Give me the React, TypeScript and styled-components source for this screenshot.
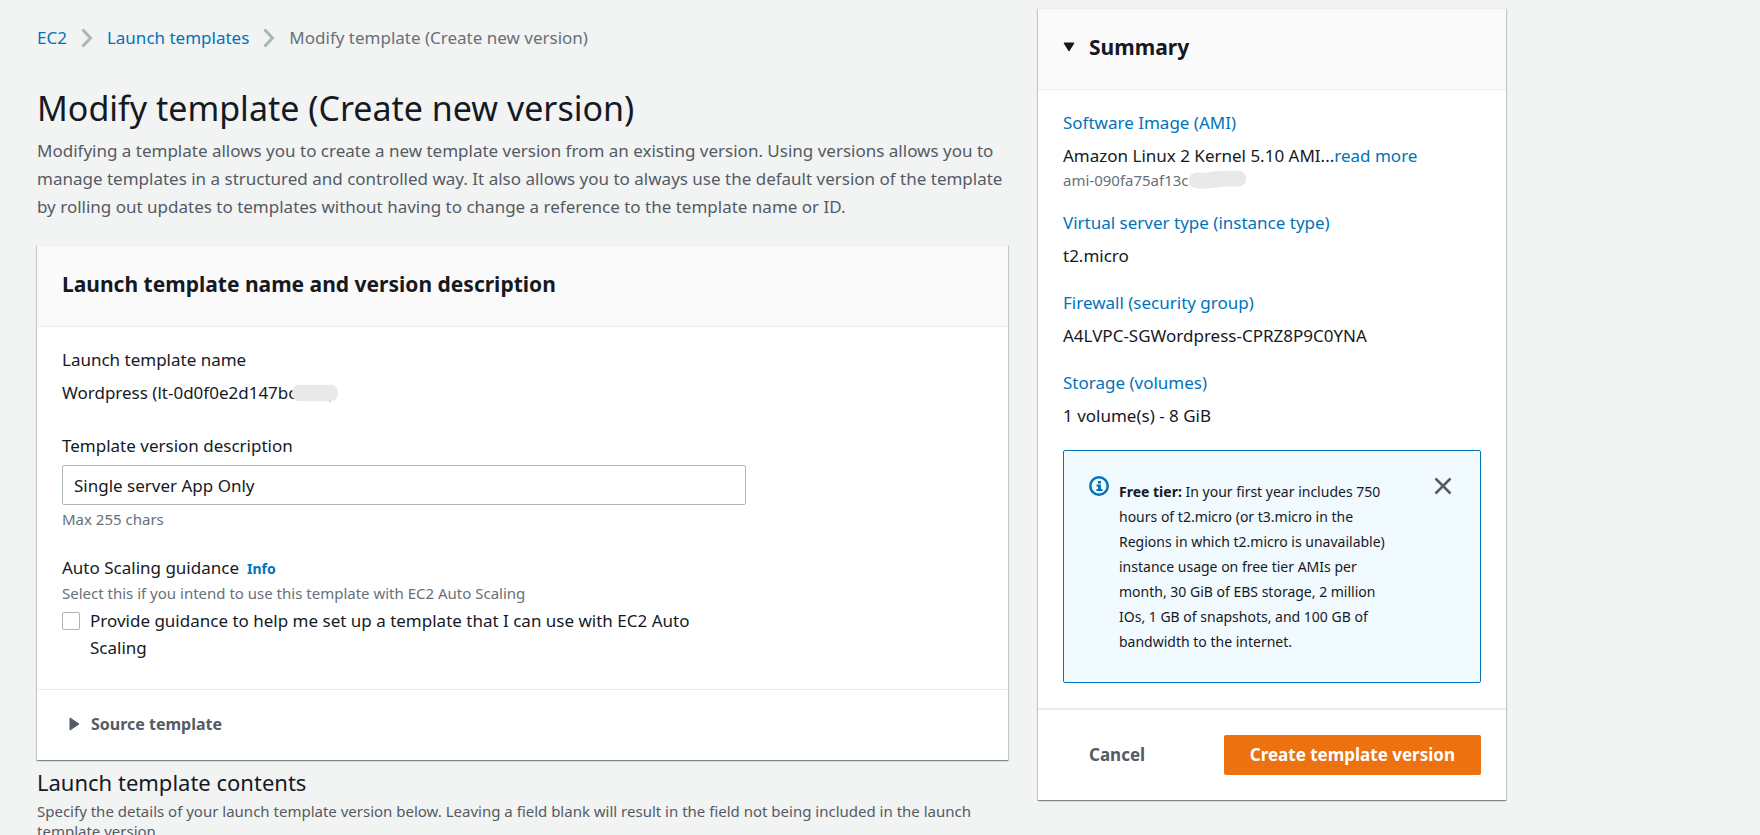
import React from "react";
import styled, { createGlobalStyle } from "styled-components";

const c = {
  page: "#f2f3f3",
  text: "#16191f",
  muted: "#545b64",
  hint: "#687078",
  link: "#0073bb",
  line: "#eaeded",
  field: "#aab7b8",
  orange: "#ec7211",
};

const GlobalStyle = createGlobalStyle`
  *, *::before, *::after { box-sizing: border-box; }
  body {
    margin: 0;
    background: ${c.page};
    color: ${c.text};
    font: 400 17px/28px "Noto Sans", "Open Sans", sans-serif;
  }
  h1, h2, p, dl, dd, dt, ol { margin: 0; padding: 0; }
  button, input { font: inherit; color: inherit; }
`;

const Page = styled.div`
  display: grid;
  grid-template-columns: minmax(0, 971fr) minmax(0, 468fr);
  gap: 30px;
  align-items: start;
  max-width: 1536px;
  padding: 0 30px 0 37px;
`;

const Main = styled.main`
  padding-top: 24px;
`;

const Link = styled.a<{ $small?: boolean }>`
  color: ${c.link};
  text-decoration: none;
  ${(p) => p.$small && "font-size: 14px; font-weight: 700; margin-left: 8px;"}
  &:hover { text-decoration: underline; }
`;

const Crumbs = styled.ol`
  display: flex;
  list-style: none;
  color: ${c.hint};
`;

const Crumb = styled.li`
  display: flex;
  align-items: center;
`;

const Chevron = styled.svg`
  width: 12px;
  height: 20px;
  margin: 0 14px;
  fill: none;
  stroke: ${c.field};
  stroke-width: 3;
`;

const PageTitle = styled.h1`
  margin-top: 31px;
  font-size: 34px;
  font-weight: 400;
  line-height: 50px;
`;

const Intro = styled.p`
  margin-top: 4px;
  color: ${c.muted};
`;

const Card = styled.section`
  background: #fff;
  border-top: 1px solid ${c.line};
  box-shadow: 0 1px 1px 0 rgba(0, 28, 36, 0.3), 1px 1px 1px 0 rgba(0, 28, 36, 0.15),
    -1px 1px 1px 0 rgba(0, 28, 36, 0.15);
`;

const TemplateCard = styled(Card)`
  margin-top: 24px;
`;

const SummaryCard = styled(Card)`
  margin-top: 8px;
`;

const CardHeader = styled.header`
  display: flex;
  align-items: center;
  gap: 14px;
  padding: 22px 25px 26px;
  background: #fafafa;
  border-bottom: 1px solid ${c.line};
`;

const CardTitle = styled.h2`
  font-size: 21px;
  font-weight: 700;
  line-height: 32px;
`;

const CardBody = styled.div<{ $roomy?: boolean }>`
  padding: 19px 25px ${(p) => (p.$roomy ? 28 : 25)}px;
`;

const Form = styled.form`
  display: flex;
  flex-direction: column;
  gap: 25px;
  max-width: 684px;
`;

const Field = styled.div`
  display: flex;
  flex-direction: column;
`;

const Value = styled.div`
  margin-top: 5px;
`;

const TextInput = styled.input`
  height: 40px;
  margin: 5px 0 4px;
  padding: 0 11px;
  background: #fff;
  border: 1px solid ${c.field};
  border-radius: 2px;
`;

const Hint = styled.p`
  color: ${c.hint};
  font-size: 15px;
  line-height: 20px;
`;

const CheckRow = styled.label`
  display: flex;
  gap: 10px;
  max-width: 640px;
  margin-top: 4px;
  line-height: 27px;
`;

const Checkbox = styled.input`
  appearance: none;
  flex: none;
  width: 18px;
  height: 18px;
  margin: 5px 0 0;
  background: #fff;
  border: 1px solid ${c.field};
  border-radius: 2px;
  &:checked { background: ${c.link}; }
`;

const Expander = styled.button`
  display: flex;
  align-items: center;
  gap: 10px;
  width: 100%;
  padding: 20px 32px 22px;
  background: none;
  border: 0;
  border-top: 1px solid ${c.line};
  color: ${c.muted};
  font-size: 16px;
  font-weight: 700;
  text-align: left;
`;

const SectionTitle = styled.h2`
  margin-top: 6px;
  font-size: 22px;
  font-weight: 400;
  line-height: 32px;
`;

const SectionText = styled(Hint)`
  margin-top: 3px;
  color: ${c.muted};
`;

const SummaryList = styled.dl`
  display: flex;
  flex-direction: column;
  gap: 19px;
`;

const SummaryValue = styled.dd`
  margin-top: 5px;
`;

const Masked = styled.span`
  position: relative;
`;

const MaskedEnd = styled.span`
  margin-left: 32px;
`;

const Mask = styled.svg<{ $start: number }>`
  position: absolute;
  left: ${(p) => p.$start}px;
  top: 50%;
  transform: translateY(-50%);
  fill: #e9e9e9;
`;

const Alert = styled.div`
  display: flex;
  align-items: flex-start;
  margin-top: 20px;
  padding: 25px;
  background: #f1faff;
  border: 1px solid ${c.link};
  border-radius: 2px;
  font-size: 14px;
  line-height: 25px;
`;

const AlertText = styled.p`
  flex: 1;
  padding: 3px 36px 3px 10px;
`;

const CloseButton = styled.button`
  display: flex;
  margin: 0 2px 0 0;
  padding: 0;
  background: none;
  border: 0;
`;

const Footer = styled.footer`
  display: flex;
  justify-content: space-between;
  padding: 25px;
  border-top: 2px solid ${c.line};
`;

const Button = styled.button<{ $primary?: boolean }>`
  height: 40px;
  padding: 0 26px;
  border: 0;
  border-radius: 2px;
  background: ${(p) => (p.$primary ? c.orange : "transparent")};
  color: ${(p) => (p.$primary ? "#fff" : c.muted)};
  font-weight: 700;
`;

const Separator = () => (
  <Chevron viewBox="0 0 12 20" aria-hidden="true">
    <path d="M1.5 1.5 L9.5 10 L1.5 18.5" />
  </Chevron>
);

export default function App() {
  return (
    <>
      <GlobalStyle />
      <Page>
        <Main>
          <nav aria-label="Breadcrumbs">
            <Crumbs>
              <Crumb><Link href="#ec2">EC2</Link><Separator /></Crumb>
              <Crumb><Link href="#templates">Launch templates</Link><Separator /></Crumb>
              <Crumb aria-current="page">Modify template (Create new version)</Crumb>
            </Crumbs>
          </nav>
          <PageTitle>Modify template (Create new version)</PageTitle>
          <Intro>
            Modifying a template allows you to create a new template version from an existing version. Using versions allows you to
            manage templates in a structured and controlled way. It also allows you to always use the default version of the template
            by rolling out updates to templates without having to change a reference to the template name or ID.
          </Intro>

          <TemplateCard>
            <CardHeader>
              <CardTitle>Launch template name and version description</CardTitle>
            </CardHeader>
            <CardBody $roomy>
              <Form>
                <Field>
                  <div>Launch template name</div>
                  <Value>
                    Wordpress (lt-0d0f0e2d147b
                    <Masked>
                      c<MaskedEnd>)</MaskedEnd>
                      <Mask $start={4} width="46" height="17" viewBox="0 0 46 17" aria-hidden="true">
                        <rect width="46" height="17" rx="8" />
                      </Mask>
                    </Masked>
                  </Value>
                </Field>
                <Field>
                  <label htmlFor="description">Template version description</label>
                  <TextInput id="description" defaultValue="Single server App Only" maxLength={255} />
                  <Hint>Max 255 chars</Hint>
                </Field>
                <Field>
                  <div>
                    Auto Scaling guidance
                    <Link $small href="#info">Info</Link>
                  </div>
                  <Hint>Select this if you intend to use this template with EC2 Auto Scaling</Hint>
                  <CheckRow>
                    <Checkbox type="checkbox" />
                    <span>Provide guidance to help me set up a template that I can use with EC2 Auto Scaling</span>
                  </CheckRow>
                </Field>
              </Form>
            </CardBody>
            <Expander type="button" aria-expanded="false">
              <svg width="12" height="14" viewBox="0 0 12 14" fill="currentColor" aria-hidden="true">
                <path d="M1 1 L10 7 L1 13 Z" stroke="currentColor" strokeLinejoin="round" />
              </svg>
              Source template
            </Expander>
          </TemplateCard>

          <SectionTitle>Launch template contents</SectionTitle>
          <SectionText>
            Specify the details of your launch template version below. Leaving a field blank will result in the field not being included in the launch template version.
          </SectionText>
        </Main>

        <SummaryCard as="aside">
          <CardHeader>
            <svg width="12" height="10" viewBox="0 0 12 10" fill="currentColor" aria-hidden="true">
              <path d="M1 1 H11 L6 9 Z" stroke="currentColor" strokeLinejoin="round" />
            </svg>
            <CardTitle>Summary</CardTitle>
          </CardHeader>
          <CardBody>
            <SummaryList>
              <div>
                <dt><Link href="#ami">Software Image (AMI)</Link></dt>
                <SummaryValue>
                  Amazon Linux 2 Kernel 5.10 AMI...<Link href="#more">read more</Link>
                  <Hint as="div">
                    ami-090fa75af13c
                    <Masked>
                      <Mask $start={0} width="57" height="19" viewBox="0 0 57 19" aria-hidden="true">
                        <path d="M8 2 C18 3 28 0 38 0 H49 C60 1 60 16 49 16 H38 C28 16 24 19 8 18 C-3 17 -3 3 8 2 Z" />
                      </Mask>
                    </Masked>
                  </Hint>
                </SummaryValue>
              </div>
              <div>
                <dt><Link href="#type">Virtual server type (instance type)</Link></dt>
                <SummaryValue>t2.micro</SummaryValue>
              </div>
              <div>
                <dt><Link href="#firewall">Firewall (security group)</Link></dt>
                <SummaryValue>A4LVPC-SGWordpress-CPRZ8P9C0YNA</SummaryValue>
              </div>
              <div>
                <dt><Link href="#storage">Storage (volumes)</Link></dt>
                <SummaryValue>1 volume(s) - 8 GiB</SummaryValue>
              </div>
            </SummaryList>
            <Alert role="status">
              <svg width="20" height="20" viewBox="0 0 20 20" aria-hidden="true">
                <circle cx="10" cy="10" r="8.75" fill="none" stroke={c.link} strokeWidth="2.5" />
                <path d="M9 5 h3 v2.5 h-3 Z M7.5 8.5 h4.5 v4.5 h1.5 v2 h-6 v-2 h1.5 v-2.5 h-1.5 Z" fill={c.link} />
              </svg>
              <AlertText>
                <b>Free tier:</b> In your first year includes 750 hours of t2.micro (or t3.micro in the Regions in which t2.micro is unavailable) instance usage on free tier AMIs per month, 30 GiB of EBS storage, 2 million IOs, 1 GB of snapshots, and 100 GB of bandwidth to the internet.
              </AlertText>
              <CloseButton type="button" aria-label="Dismiss">
                <svg width="20" height="20" viewBox="0 0 20 20" aria-hidden="true">
                  <path d="M2.5 2.5 L17.5 17.5 M17.5 2.5 L2.5 17.5" stroke={c.muted} strokeWidth="2.5" />
                </svg>
              </CloseButton>
            </Alert>
          </CardBody>
          <Footer>
            <Button type="button">Cancel</Button>
            <Button type="button" $primary>Create template version</Button>
          </Footer>
        </SummaryCard>
      </Page>
    </>
  );
}
